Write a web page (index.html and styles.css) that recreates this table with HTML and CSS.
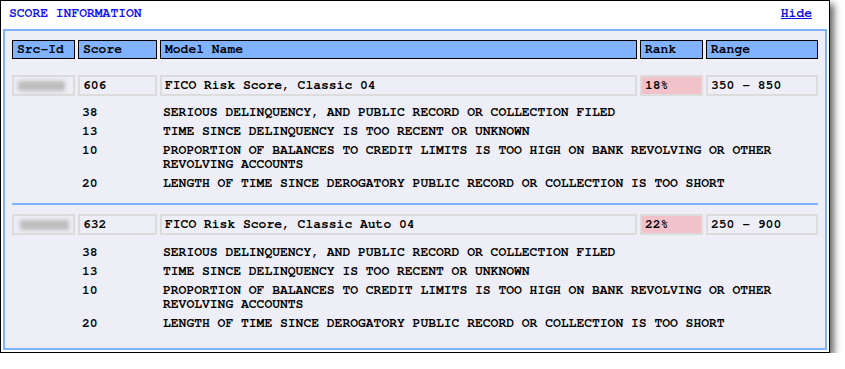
FILE: index.html
```html
<!DOCTYPE html>
<html>
<head>
<meta charset="utf-8">
<link rel="stylesheet" href="styles.css">
</head>
<body>
<div class="window">
  <div class="titlebar">
    <span class="title">SCORE INFORMATION</span>
    <a class="hide" href="#">Hide</a>
  </div>
  <div class="panel">
    <div class="grid head">
      <div class="hcell">Src-Id</div>
      <div class="hcell">Score</div>
      <div class="hcell">Model Name</div>
      <div class="hcell">Rank</div>
      <div class="hcell">Range</div>
    </div>

    <div class="block first">
      <div class="grid data">
        <div class="dcell"><span class="blur"></span></div>
        <div class="dcell">606</div>
        <div class="dcell">FICO Risk Score, Classic 04</div>
        <div class="dcell rank">18%</div>
        <div class="dcell">350 - 850</div>
      </div>
      <div class="reasons">
        <div class="reason"><div class="code">38</div><div class="desc">SERIOUS DELINQUENCY, AND PUBLIC RECORD OR COLLECTION FILED</div></div>
        <div class="reason"><div class="code">13</div><div class="desc">TIME SINCE DELINQUENCY IS TOO RECENT OR UNKNOWN</div></div>
        <div class="reason"><div class="code">10</div><div class="desc">PROPORTION OF BALANCES TO CREDIT LIMITS IS TOO HIGH ON BANK REVOLVING OR OTHER REVOLVING ACCOUNTS</div></div>
        <div class="reason"><div class="code">20</div><div class="desc">LENGTH OF TIME SINCE DEROGATORY PUBLIC RECORD OR COLLECTION IS TOO SHORT</div></div>
      </div>
    </div>

    <div class="sep"></div>

    <div class="block second">
      <div class="grid data">
        <div class="dcell"><span class="blur wide"></span></div>
        <div class="dcell">632</div>
        <div class="dcell">FICO Risk Score, Classic Auto 04</div>
        <div class="dcell rank">22%</div>
        <div class="dcell">250 - 900</div>
      </div>
      <div class="reasons">
        <div class="reason"><div class="code">38</div><div class="desc">SERIOUS DELINQUENCY, AND PUBLIC RECORD OR COLLECTION FILED</div></div>
        <div class="reason"><div class="code">13</div><div class="desc">TIME SINCE DELINQUENCY IS TOO RECENT OR UNKNOWN</div></div>
        <div class="reason"><div class="code">10</div><div class="desc">PROPORTION OF BALANCES TO CREDIT LIMITS IS TOO HIGH ON BANK REVOLVING OR OTHER REVOLVING ACCOUNTS</div></div>
        <div class="reason"><div class="code">20</div><div class="desc">LENGTH OF TIME SINCE DEROGATORY PUBLIC RECORD OR COLLECTION IS TOO SHORT</div></div>
      </div>
    </div>
  </div>
</div>
</body>
</html>
```
FILE: styles.css
```css
html, body {
  margin: 0;
  padding: 0;
  background: #fff;
}
body {
  font-family: "Nimbus Mono PS", "Nimbus Mono L", "FreeMono", "Courier", "Liberation Mono", monospace;
  font-size: 13px;
  font-weight: bold;
  color: #000;
}
.window {
  width: 824px;
  border: 1px solid #000;
  padding: 0 2px 2px 2px;
  background: #fff;
  box-shadow: 4px 4px 7px rgba(0, 0, 0, 0.6);
}
.titlebar {
  height: 28px;
  box-sizing: border-box;
  padding: 5px 15px 0 6px;
  display: flex;
  justify-content: space-between;
  align-items: flex-start;
  line-height: 15px;
}
.title {
  color: #1414f0;
}
.hide {
  color: #1010e0;
  text-decoration: underline;
}
.panel {
  border: 2px solid #80b2ff;
  background: #eeeef6;
  padding: 9px 7px 15px 7px;
}
.grid {
  display: grid;
  grid-template-columns: 63px 79px 477px 63px 112px;
  column-gap: 3px;
}
.hcell {
  height: 19px;
  box-sizing: border-box;
  border: 1px solid #000;
  background: #80b2ff;
  padding: 0 4px;
  line-height: 17px;
  white-space: nowrap;
}
.block.first {
  margin-top: 16px;
}
.dcell {
  height: 21px;
  box-sizing: border-box;
  border: 2px solid #dcdcdc;
  padding: 0 3px;
  line-height: 17px;
  white-space: nowrap;
  display: flex;
  align-items: center;
}
.dcell.rank {
  background: #f2c2ca;
}
.blur {
  display: block;
  width: 47px;
  height: 10px;
  margin-left: 1px;
  background: #bcbcbc;
  filter: blur(2px);
}
.blur.wide {
  margin-left: 3px;
  width: 49px;
}
.reasons {
  margin-top: 7px;
}
.second .reasons {
  margin-top: 8px;
}
.reason {
  display: grid;
  grid-template-columns: 63px 79px 1fr;
  column-gap: 3px;
  padding: 3px 0 2px 0;
  line-height: 14px;
}
.code {
  grid-column: 2;
  padding-left: 4px;
}
.desc {
  grid-column: 3;
  padding-left: 3px;
}
.sep {
  height: 2px;
  background: #80b2ff;
  margin: 10px 0 9px 0;
}
```
